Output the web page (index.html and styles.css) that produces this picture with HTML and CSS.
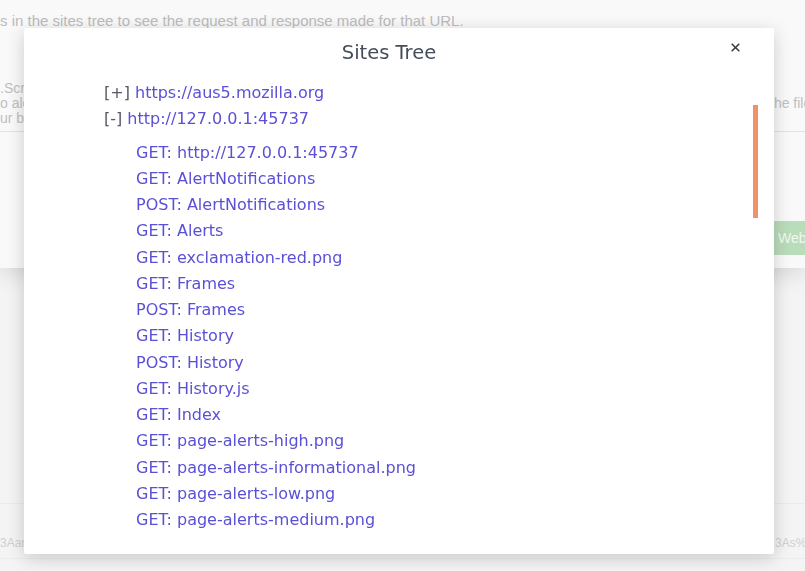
FILE: index.html
```html
<!DOCTYPE html>
<html lang="en">
<head>
<meta charset="utf-8">
<title>Sites Tree</title>
<link rel="stylesheet" href="styles.css">
</head>
<body>
<div class="page">
  <section class="card">
    <p class="intro">s in the sites tree to see the request and response made for that URL.</p>
    <div class="form-row">
      <div class="left-text">.Script code<br>o alerts in<br>ur browser</div>
      <div class="right-text">the file</div>
    </div>
    <div class="rule"></div>
    <div class="actions"><span class="btn">Web</span></div>
  </section>
  <section class="lower">
    <div class="result-row"><span class="res-left">3Aan</span><span class="res-right">3As%</span></div>
  </section>
</div>

<div class="backdrop">
  <div class="modal">
    <header class="modal-header">
      <h2 class="modal-title">Sites Tree</h2>
    </header>
    <button class="close" aria-label="Close">
      <svg width="9" height="9" viewBox="0 0 9 9"><path d="M0.7 0.7 L8.3 8.3 M8.3 0.7 L0.7 8.3" stroke="#353a44" stroke-width="1.5" fill="none"/></svg>
    </button>
    <div class="tree-body">
      <ul class="tree">
        <li><span class="bracket">[+]</span> <span class="link">https://aus5.mozilla.org</span></li>
        <li><span class="bracket">[-]</span> <span class="link">http://127.0.0.1:45737</span>
          <ul class="children">
            <li class="link">GET: http://127.0.0.1:45737</li>
            <li class="link">GET: AlertNotifications</li>
            <li class="link">POST: AlertNotifications</li>
            <li class="link">GET: Alerts</li>
            <li class="link">GET: exclamation-red.png</li>
            <li class="link">GET: Frames</li>
            <li class="link">POST: Frames</li>
            <li class="link">GET: History</li>
            <li class="link">POST: History</li>
            <li class="link">GET: History.js</li>
            <li class="link">GET: Index</li>
            <li class="link">GET: page-alerts-high.png</li>
            <li class="link">GET: page-alerts-informational.png</li>
            <li class="link">GET: page-alerts-low.png</li>
            <li class="link">GET: page-alerts-medium.png</li>
          </ul>
        </li>
      </ul>
    </div>
    <div class="scroll-thumb"></div>
  </div>
</div>
</body>
</html>
```

FILE: styles.css
```css
html, body {
  margin: 0;
  padding: 0;
}

body {
  width: 805px;
  height: 571px;
  overflow: hidden;
  background: #f4f4f5;
  font-family: "Liberation Sans", Arial, sans-serif;
}

.page {
  width: 805px;
  height: 571px;
  overflow: hidden;
}

.card {
  position: relative;
  z-index: 1;
  height: 268px;
  box-sizing: border-box;
  padding-top: 11px;
  background: #f9f9f9;
  box-shadow: 0 6px 22px rgba(0, 0, 0, 0.12);
}

.intro {
  margin: 0;
  font-size: 15px;
  line-height: 20px;
  color: #bcbcbc;
  white-space: nowrap;
}

.form-row {
  display: flex;
  margin-top: 50px;
  font-size: 14px;
  line-height: 15px;
  color: #c0c0c0;
  white-space: nowrap;
}

.left-text {
  width: 770px;
  flex: none;
}

.right-text {
  padding-top: 15px;
}

.rule {
  margin-top: 5px;
  height: 1px;
  background: #e3e3e3;
}

.actions {
  display: flex;
  margin-top: 89px;
}

.btn {
  margin-left: 774px;
  flex: none;
  width: 31px;
  box-sizing: border-box;
  height: 34px;
  padding: 0 0 0 4px;
  line-height: 34px;
  font-size: 14px;
  color: #f1f8f1;
  background: #b9dcbb;
  white-space: nowrap;
  overflow: hidden;
}

.lower {
  padding-top: 235px;
}

.result-row {
  display: grid;
  grid-template-columns: 775px 1fr;
  height: 56px;
  box-sizing: border-box;
  padding-top: 31px;
  border-top: 1px solid #ececed;
  border-bottom: 1px solid #ececed;
  font-size: 12px;
  line-height: 16px;
  color: #d0d0d2;
  white-space: nowrap;
  overflow: hidden;
}

/* modal */
.backdrop {
  position: fixed;
  inset: 0;
  z-index: 10;
}

.modal {
  position: relative;
  margin: 28px 0 0 24px;
  width: 750px;
  height: 526px;
  box-sizing: border-box;
  background: #ffffff;
  border-radius: 2px;
  box-shadow: 0 4px 18px rgba(0, 0, 0, 0.18);
  overflow: hidden;
}

.modal-header {
  padding: 11px 20px 12px 0;
  text-align: center;
}

.modal-title {
  margin: 0;
  font-family: "DejaVu Sans", sans-serif;
  font-weight: normal;
  font-size: 19.5px;
  line-height: 28px;
  color: #454d5d;
}

.close {
  position: absolute;
  top: 15px;
  right: 34px;
  width: 9px;
  height: 9px;
  padding: 0;
  border: 0;
  background: none;
  display: block;
  line-height: 0;
}

.tree-body {
  height: 452px;
  overflow: hidden;
  padding: 1px 0 0 80px;
  box-sizing: border-box;
  font-family: "DejaVu Sans", sans-serif;
  font-size: 16px;
  line-height: 26.25px;
}

.tree,
.children {
  list-style: none;
  margin: 0;
  padding: 0;
}

.children {
  margin-top: 7px;
  padding-left: 32px;
}

.bracket {
  color: #555a63;
}

.link {
  color: #5a50d6;
}

.scroll-thumb {
  position: absolute;
  left: 729px;
  top: 77px;
  width: 5px;
  height: 113px;
  background: #f0916b;
}
```
